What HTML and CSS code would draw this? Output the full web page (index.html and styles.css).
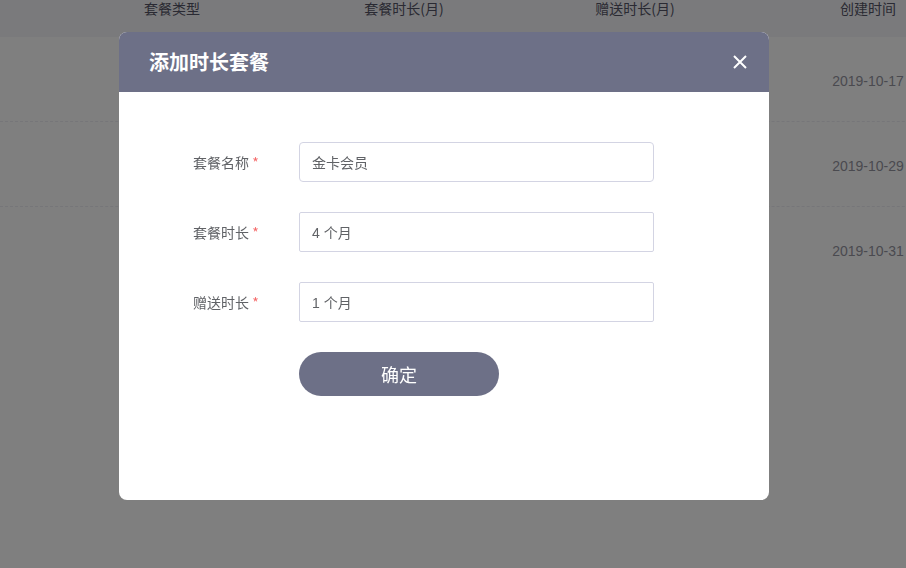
FILE: index.html
```html
<!DOCTYPE html>
<html lang="zh">
<head>
<meta charset="utf-8">
<link rel="stylesheet" href="styles.css">
</head>
<body>
<div class="page">
  <div class="table">
    <div class="row head">
      <div class="cell">套餐类型</div>
      <div class="cell">套餐时长(月)</div>
      <div class="cell">赠送时长(月)</div>
      <div class="cell">创建时间</div>
    </div>
    <div class="row body">
      <div class="cell"></div><div class="cell"></div><div class="cell"></div>
      <div class="cell date">2019-10-17</div>
    </div>
    <div class="row body">
      <div class="cell"></div><div class="cell"></div><div class="cell"></div>
      <div class="cell date">2019-10-29</div>
    </div>
    <div class="row body last">
      <div class="cell"></div><div class="cell"></div><div class="cell"></div>
      <div class="cell date">2019-10-31</div>
    </div>
  </div>
</div>
<div class="overlay">
  <div class="modal">
    <div class="modal-head">
      <span class="modal-title">添加时长套餐</span>
      <svg class="close" width="14" height="14" viewBox="0 0 14 14"><path d="M1 1L13 13M13 1L1 13" stroke="#fff" stroke-width="2" fill="none"/></svg>
    </div>
    <div class="modal-body">
      <div class="field">
        <label class="label">套餐名称 <span class="req">*</span></label>
        <div class="input rounded">金卡会员</div>
      </div>
      <div class="field">
        <label class="label">套餐时长 <span class="req">*</span></label>
        <div class="input">4 个月</div>
      </div>
      <div class="field">
        <label class="label">赠送时长 <span class="req">*</span></label>
        <div class="input">1 个月</div>
      </div>
      <div class="actions">
        <button class="btn">确定</button>
      </div>
    </div>
  </div>
</div>
</body>
</html>
```
FILE: styles.css
```css
html, body {
  margin: 0;
  padding: 0;
  width: 906px;
  height: 568px;
  overflow: hidden;
  background: #fff;
  font-family: "Liberation Sans", "Noto Sans CJK SC", sans-serif;
}
.page {
  width: 906px;
  height: 568px;
  overflow: hidden;
}
.table {
  width: 1000px;
}
.row {
  display: grid;
  grid-template-columns: 56px 232px 232px 230px 236px;
}
.row .cell:first-child { grid-column: 2; }
.cell {
  text-align: center;
  font-size: 14px;
  color: #606266;
}
.head {
  height: 37px;
  background: #f4f4f8;
  align-items: start;
}
.head .cell {
  line-height: 16px;
  color: #555566;
  font-family: "Noto Sans CJK SC", sans-serif;
  font-size: 14px;
  margin-top: 0;
}
.body {
  height: 84px;
  border-bottom: 1px dashed #ececf2;
  align-items: center;
}
.body.last { border-bottom: none; }
.date {
  color: #94949f;
  font-size: 14px;
  padding-top: 3px;
}
.overlay {
  position: fixed;
  inset: 0;
  background: rgba(0, 0, 0, 0.5);
  display: flex;
  align-items: flex-start;
  padding: 32px 0 0 119px;
}
.modal {
  width: 650px;
  height: 468px;
  background: #fff;
  border-radius: 8px;
  overflow: hidden;
  display: flex;
  flex-direction: column;
}
.modal-head {
  height: 60px;
  background: #6d7087;
  display: flex;
  align-items: center;
  justify-content: space-between;
  padding: 0 22px 0 30px;
  flex: none;
}
.modal-title {
  color: #fff;
  font-family: "Noto Sans CJK SC", sans-serif;
  font-weight: 700;
  font-size: 20px;
  line-height: 24px;
}
.close { display: block; }
.modal-body {
  padding: 50px 0 0 74px;
  display: flex;
  flex-direction: column;
  gap: 30px;
}
.field {
  display: flex;
  align-items: center;
  height: 40px;
}
.label {
  width: 106px;
  font-family: "Noto Sans CJK SC", sans-serif;
  font-size: 14px;
  color: #606266;
}
.req { color: #f56c6c; }
.input {
  width: 355px;
  height: 40px;
  box-sizing: border-box;
  border: 1px solid #d3d4e3;
  border-radius: 2px;
  padding: 0 12px;
  display: flex;
  align-items: center;
  font-family: "Liberation Sans", "Noto Sans CJK SC", sans-serif;
  font-size: 14px;
  color: #606266;
}
.input.rounded { border-radius: 4px; }
.actions {
  padding-left: 106px;
}
.btn {
  width: 200px;
  height: 44px;
  border: none;
  border-radius: 22px;
  background: #6d7087;
  color: #fff;
  font-family: "Noto Sans CJK SC", sans-serif;
  font-size: 18px;
  padding: 0;
}
```
